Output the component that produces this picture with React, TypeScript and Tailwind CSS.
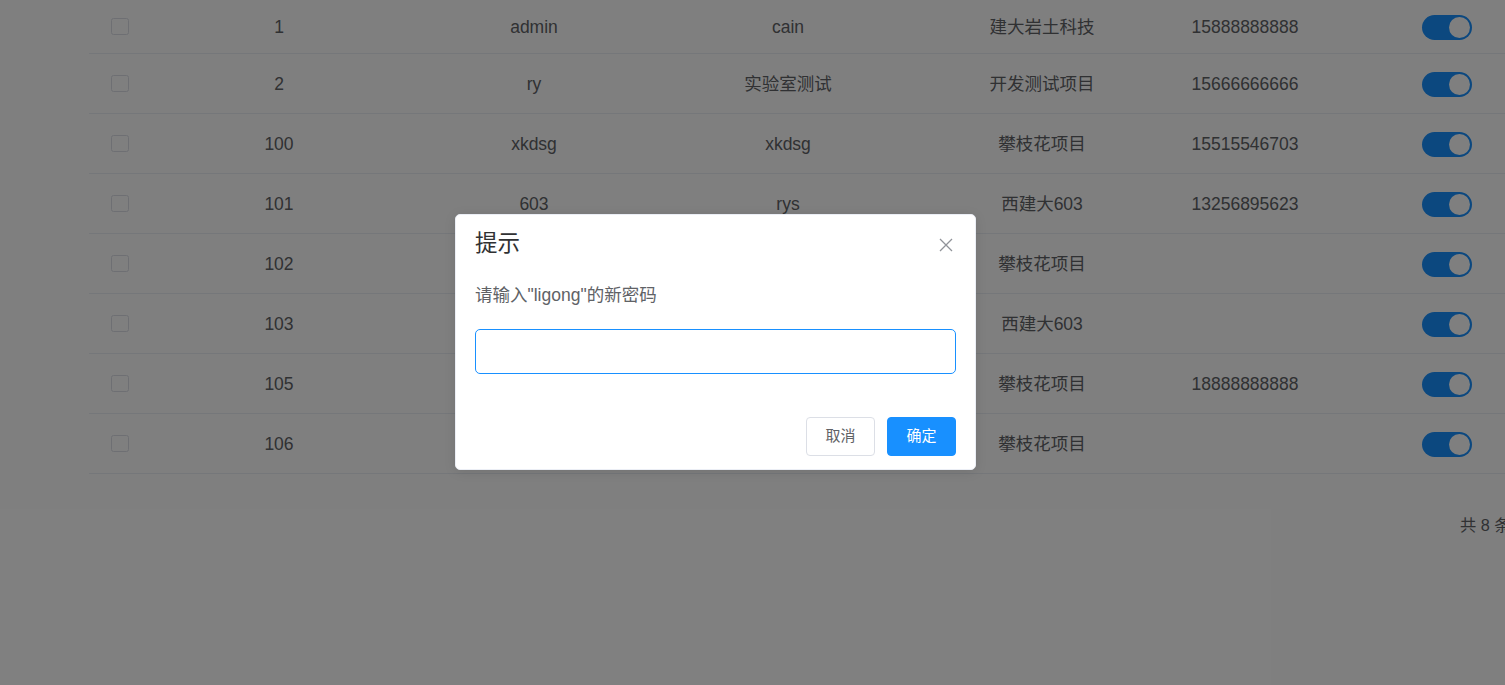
import React from "react";

const rows = [
  { id: "1", user: "admin", nick: "cain", dept: "建大岩土科技", phone: "15888888888" },
  { id: "2", user: "ry", nick: "实验室测试", dept: "开发测试项目", phone: "15666666666" },
  { id: "100", user: "xkdsg", nick: "xkdsg", dept: "攀枝花项目", phone: "15515546703" },
  { id: "101", user: "603", nick: "rys", dept: "西建大603", phone: "13256895623" },
  { id: "102", user: "ligong", nick: "ligong", dept: "攀枝花项目", phone: "" },
  { id: "103", user: "xjd", nick: "xjd", dept: "西建大603", phone: "" },
  { id: "105", user: "pzh", nick: "pzh", dept: "攀枝花项目", phone: "18888888888" },
  { id: "106", user: "test", nick: "test", dept: "攀枝花项目", phone: "" },
];

const font = "font-['Liberation_Sans','Noto_Sans_CJK_SC',sans-serif]";

function Switch() {
  return (
    <div className="flex h-[25px] w-[50px] items-center justify-end rounded-full bg-[#1890ff] px-[2px]">
      <div className="h-[21px] w-[21px] rounded-full bg-white" />
    </div>
  );
}

export default function App() {
  return (
    <div className={`relative h-[685px] w-full overflow-hidden bg-white ${font}`}>
      <div className="ml-[89px] w-[1484px] text-[17.5px] text-[#606266]">
        {rows.map((r, i) => (
          <div
            key={r.id}
            className={`flex items-center border-b border-[#ebeef5] ${i === 0 ? "h-[54px]" : "h-[60px]"}`}
          >
            <div className="flex w-[62px] justify-center">
              <div className="h-[17.5px] w-[17.5px] rounded-[2.5px] border border-[#dcdfe6] bg-white" />
            </div>
            <div className="w-[256px] pt-[2px] text-center">{r.id}</div>
            <div className="w-[254px] pt-[2px] text-center">{r.user}</div>
            <div className="w-[254px] pt-[2px] text-center">{r.nick}</div>
            <div className="w-[254px] pt-[2px] text-center">{r.dept}</div>
            <div className="w-[152px] pt-[2px] text-center">{r.phone}</div>
            <div className="flex w-[252px] justify-center pt-[2px]">
              <Switch />
            </div>
          </div>
        ))}
      </div>
      <div className="ml-[1460px] mt-[41px] whitespace-nowrap text-[16.25px] leading-[20px] text-[#606266]">
        共 8 条
      </div>

      {/* modal mask */}
      <div className="absolute inset-0 bg-black/50" />

      <div className="absolute left-[455px] top-[214px] w-[521px] rounded-[5px] border border-[#ebeef5] bg-white pb-[13px] shadow-[0_2px_12px_rgba(0,0,0,0.1)]">
        <div className="relative px-[19px] pb-[12px] pt-[18px]">
          <div className="text-[22.5px] leading-[22.5px] text-[#303133]">提示</div>
          <svg
            className="absolute right-[22px] top-[23px]"
            width="14"
            height="14"
            viewBox="0 0 14 14"
          >
            <path d="M1 1L13 13M13 1L1 13" stroke="#909399" strokeWidth="1.3" />
          </svg>
        </div>
        <div className="px-[19px] pt-[12px]">
          <div className="text-[17.5px] leading-[30px] text-[#606266]">请输入"ligong"的新密码</div>
          <div className="mt-[19px] h-[45px] w-full rounded-[5px] border border-[#1890ff] bg-white" />
        </div>
        <div className="mt-[43px] flex justify-end gap-[12px] px-[19px]">
          <button className="h-[39px] w-[69px] rounded-[4px] border border-[#dcdfe6] bg-white text-[15px] text-[#606266]">
            取消
          </button>
          <button className="h-[39px] w-[69px] rounded-[4px] border border-[#1890ff] bg-[#1890ff] text-[15px] text-white">
            确定
          </button>
        </div>
      </div>
    </div>
  );
}
